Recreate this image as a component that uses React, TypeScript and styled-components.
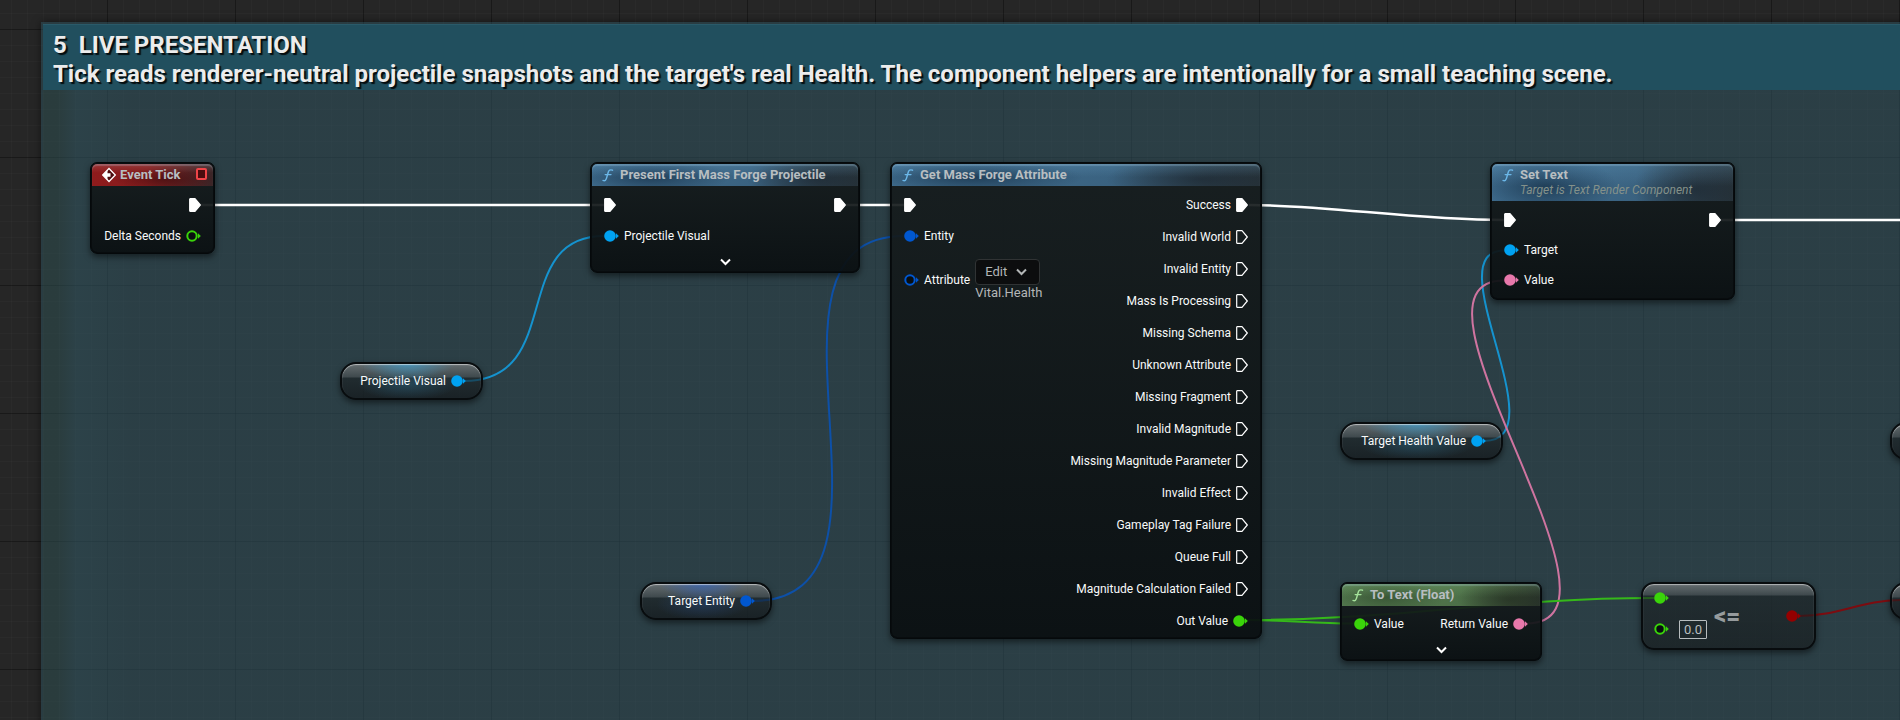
import React from 'react';
import styled, { createGlobalStyle, css } from 'styled-components';

const Global = createGlobalStyle`
  * { box-sizing: border-box; }
  body { margin: 0; background: #262626; }
`;

const white = '#ffffff';
const azure = '#00a2f2';
const blue = '#0057d0';
const green = '#3ad40a';
const pink = '#e878ab';
const red = '#950000';

const Graph = styled.main`
  position: relative;
  min-height: 100vh;
  overflow: hidden;
  font-family: Roboto, 'Liberation Sans', sans-serif;
  font-size: 12px;
  line-height: 16px;
  color: #f8fafa;
  background-color: #262626;
  background-image:
    linear-gradient(90deg, rgba(0, 0, 0, 0.4) 1px, transparent 1px),
    linear-gradient(rgba(0, 0, 0, 0.4) 1px, transparent 1px),
    linear-gradient(90deg, rgba(255, 255, 255, 0.02) 1px, transparent 1px),
    linear-gradient(rgba(255, 255, 255, 0.02) 1px, transparent 1px);
  background-size: 128px 128px, 128px 128px, 16px 16px, 16px 16px;
  background-position: 107px 0, 0 29px, 11px 0, 0 13px;
`;

const Comment = styled.section`
  position: absolute;
  left: 41px;
  top: 22px;
  right: -8px;
  bottom: -8px;
  border: 2px solid rgba(43, 82, 94, 0.5);
  background: linear-gradient(90deg, rgba(46, 82, 84, 0.5) 0, rgba(46, 82, 84, 0.5) 14px, rgba(49, 88, 100, 0.56) 34px, rgba(47, 82, 94, 0.56) 90px);
  background-clip: padding-box;
  box-shadow: 0 0 8px rgba(0, 0, 0, 0.5);
`;

const CommentTitle = styled.h1`
  margin: 0;
  height: 66px;
  padding: 6px 10px;
  font-size: 24px;
  line-height: 29px;
  font-weight: 700;
  white-space: pre;
  color: #ececec;
  text-shadow: 2px 2px 1px rgba(0, 0, 0, 0.85);
  background: #214f5e;
  border-top: 1px solid #2a5a69;
`;

const Wires = styled.svg`
  position: absolute;
  inset: 0;
  width: 100%;
  height: 100%;
  fill: none;
`;

type Place = { $x: number; $y: number; $w: number };

const NodeFrame = styled.article<Place>`
  position: absolute;
  left: ${p => p.$x}px;
  top: ${p => p.$y}px;
  width: ${p => p.$w}px;
  padding: 1px;
  border-radius: 7px;
  background: linear-gradient(rgba(22, 28, 29, 0.92), rgba(10, 15, 17, 0.94));
  border: 1px solid #05090b;
  box-shadow: 0 3px 6px rgba(0, 0, 0, 0.5), inset 0 0 0 1px #080c0e;
`;

const headers = {
  event: css`
    background:
      linear-gradient(rgba(255, 255, 255, 0.12), transparent 40%),
      radial-gradient(ellipse at 60% 70%, rgba(60, 10, 12, 0.6), transparent 50%),
      linear-gradient(90deg, #8f1b1c 0, #851d1e 45%, #3a2527 100%);
  `,
  call: css`
    background:
      linear-gradient(rgba(120, 180, 220, 0.2), transparent 60%),
      radial-gradient(ellipse 30% 80% at 22% 60%, rgba(25, 52, 76, 0.8), transparent),
      radial-gradient(ellipse 26% 90% at 84% 70%, rgba(22, 32, 42, 0.5), transparent),
      linear-gradient(90deg, #416f91 0, #3a6280 60%, #2e404c 85%, #28343b 100%);
  `,
  pure: css`
    background:
      linear-gradient(rgba(150, 210, 140, 0.18), transparent 60%),
      radial-gradient(ellipse 30% 80% at 22% 60%, rgba(48, 74, 45, 0.7), transparent),
      radial-gradient(ellipse 26% 90% at 84% 70%, rgba(28, 38, 28, 0.5), transparent),
      linear-gradient(90deg, #547a4f 0, #4d7048 60%, #384a34 85%, #2a352c 100%);
  `,
};

const Header = styled.header<{ $kind: keyof typeof headers }>`
  display: flex;
  align-items: flex-start;
  padding: 3px 6px 3px 10px;
  gap: 4px;
  border-radius: 5px 5px 0 0;
  box-shadow: inset 0 2px 1px rgba(180, 215, 235, 0.25);
  ${p => headers[p.$kind]}
`;

const Titles = styled.div`
  flex: 1;
  white-space: nowrap;
`;

const Title = styled.h2`
  margin: 0;
  font-size: 13px;
  line-height: 16px;
  font-weight: 700;
  color: #b8bec1;
`;

const Subtitle = styled.p`
  margin: 0;
  font-style: italic;
  font-size: 12px;
  line-height: 15px;
  color: #84918a;
`;

const Body = styled.div<{ $top?: number; $tail?: number }>`
  display: flex;
  justify-content: space-between;
  padding: ${p => p.$top ?? 11}px 12px ${p => p.$tail ?? 8}px;
`;

const Column = styled.div<{ $end?: boolean; $gap: number }>`
  display: flex;
  flex-direction: column;
  align-items: ${p => (p.$end ? 'flex-end' : 'flex-start')};
  gap: ${p => p.$gap}px;
`;

const Row = styled.div<{ $tall?: boolean }>`
  display: flex;
  align-items: center;
  height: ${p => (p.$tall ? 42 : 16)}px;
  gap: 5px;
  white-space: nowrap;
`;

const Expand = styled.button`
  display: flex;
  align-items: center;
  justify-content: center;
  width: 100%;
  height: 19px;
  padding: 0;
  border: 0;
  background: none;
`;

const Pill = styled.article<Place & { $glow?: string }>`
  position: absolute;
  left: ${p => p.$x}px;
  top: ${p => p.$y}px;
  width: ${p => p.$w}px;
  height: 38px;
  display: flex;
  align-items: center;
  justify-content: flex-end;
  gap: 5px;
  padding: 0 15px;
  white-space: nowrap;
  border: 2px solid #080c0e;
  border-radius: 16px;
  background:
    radial-gradient(ellipse 34% 14px at 47% 0, rgba(${p => p.$glow ?? '0, 0, 0'}, ${p => (p.$glow ? 0.7 : 0)}), transparent),
    radial-gradient(ellipse 36% 16px at 47% 20px, rgba(${p => p.$glow ?? '0, 0, 0'}, ${p => (p.$glow ? 0.25 : 0)}), transparent),
    linear-gradient(rgba(140, 140, 140, 0.6) 0, rgba(76, 80, 82, 0.6) 13px, rgba(26, 31, 33, 0.6) 14px, rgba(14, 15, 17, 0.6) 100%);
  box-shadow: 0 3px 6px rgba(0, 0, 0, 0.5), inset 0 1px 1px rgba(255, 255, 255, 0.55);
`;

const Compare = styled.article<Place>`
  position: absolute;
  left: ${p => p.$x}px;
  top: ${p => p.$y}px;
  width: ${p => p.$w}px;
  height: 68px;
  display: flex;
  align-items: center;
  gap: 7px;
  padding: 0 13px 0 11px;
  border: 2px solid #080c0e;
  border-radius: 13px;
  background: linear-gradient(rgba(140, 140, 140, 0.6) 0, rgba(76, 80, 82, 0.6) 11px, rgba(26, 31, 33, 0.6) 12px, rgba(20, 23, 24, 0.6) 100%);
  box-shadow: 0 3px 6px rgba(0, 0, 0, 0.5), inset 0 1px 1px rgba(255, 255, 255, 0.5);
`;

const Inputs = styled(Column)`
  align-self: flex-start;
  padding-top: 6px;
`;

const Operator = styled.strong`
  flex: 1;
  font-size: 24px;
  line-height: 24px;
  font-weight: 900;
  color: #969b9d;
`;

const NumberBox = styled.input`
  width: 28px;
  height: 19px;
  margin-left: 5px;
  padding: 0;
  text-align: center;
  font: inherit;
  font-size: 13px;
  color: #b8bdbf;
  background: transparent;
  border: 1px solid #b8bdbf;
  border-radius: 1px;
`;

const Picker = styled.div`
  display: flex;
  flex-direction: column;
  color: #b3b6b7;
  font-size: 13px;
  line-height: 16px;
`;

const EditButton = styled.button`
  display: flex;
  align-items: center;
  gap: 9px;
  width: 65px;
  height: 26px;
  padding: 0 9px;
  font: inherit;
  font-size: 13px;
  color: inherit;
  background: #0c0d0e;
  border: 1px solid #303334;
  border-radius: 4px;
`;

const ExecPin = ({ on = true }: { on?: boolean }) => (
  <svg width="12" height="14" viewBox="0 0 12 14">
    <path d="M.7 1.2Q.7.7 1.2.7H6L11.3 7 6 13.3H1.2Q.7 13.3.7 12.8Z" fill={on ? white : 'none'} stroke={white} strokeWidth="1.2" strokeLinejoin="round" />
  </svg>
);

const DataPin = ({ color, on = true }: { color: string; on?: boolean }) => (
  <svg width="15" height="12" viewBox="0 0 15 12">
    <circle cx="6" cy="6" r={on ? 5.8 : 4.7} fill={on ? color : '#0a0e10'} stroke={color} strokeWidth={on ? 0 : 2} />
    <path d="M12 3.200L14.800 6 12 8.800Z" fill={color} />
  </svg>
);

const FunctionIcon = () => (
  <svg width="14" height="16" viewBox="0 0 14 16" fill="none" stroke="currentColor" strokeWidth="1.4" strokeLinecap="round">
    <path d="M1 13.400c2 .8 3-.2 3.500-2.200L6.300 5C6.800 3.200 8 2.400 10.500 3.200M3.200 7.600h5.800" />
  </svg>
);

const EventIcon = () => (
  <svg width="14" height="16" viewBox="0 0 14 16">
    <path d="M7 1.500L13.300 8 7 14.500.7 8Z" fill="#4a0c0e" stroke="#fff" strokeWidth="1.300" />
    <path d="M.7 8L5.500 3V6.300H8.500V9.700H5.500V13Z" fill="#fff" />
  </svg>
);

const Chevron = ({ color = white }: { color?: string }) => (
  <svg width="11" height="8" viewBox="0 0 11 8" fill="none" stroke={color} strokeWidth="2">
    <path d="M1 1.500L5.500 6 10 1.500" />
  </svg>
);

const IconTint = styled.span<{ $color: string }>`
  display: flex;
  color: ${p => p.$color};
`;

const Marker = styled.span`
  width: 11px;
  height: 12px;
  margin-top: 1px;
  border: 2px solid #f04448;
  border-radius: 2px;
  background: #4a0c0e;
`;

const statuses = [
  'Invalid World', 'Invalid Entity', 'Mass Is Processing', 'Missing Schema', 'Unknown Attribute',
  'Missing Fragment', 'Invalid Magnitude', 'Missing Magnitude Parameter', 'Invalid Effect',
  'Gameplay Tag Failure', 'Queue Full', 'Magnitude Calculation Failed',
];

export default function App() {
  return (
    <Graph>
      <Global />
      <Comment>
        <CommentTitle>{'5  LIVE PRESENTATION\nTick reads renderer-neutral projectile snapshots and the target\'s real Health. The component helpers are intentionally for a small teaching scene.'}</CommentTitle>
      </Comment>
      <Wires>
        <g stroke={white} strokeWidth="2.5">
          <path d="M201 205H604M846 205H904M1249 205C1330 205 1410 220 1504 220M1721 220H4000" />
        </g>
        <g strokeWidth="2">
          <path d="M464 381C566 381 508 236 604 236" stroke="#1593cf" />
          <path d="M752 601C928 601 732 236 904 236" stroke="#0d50a8" />
          <path d="M1484 441C1560 441 1434 250.500 1504 250.500" stroke="#1593cf" />
          <path d="M1526 623.500C1650 623.500 1384 280.500 1504 280.500" stroke="#cf74a0" />
          <path d="M1245 620C1400 620 1500 598 1654 598M1245 620C1290 620 1310 623.500 1354 623.500" stroke="#35b81a" />
          <path d="M1799 616C1840 616 1860 600 1904 600" stroke="#7d0c10" />
        </g>
      </Wires>

      <NodeFrame $x={90} $y={162} $w={125}>
        <Header $kind="event">
          <EventIcon />
          <Titles><Title>Event Tick</Title></Titles>
          <Marker />
        </Header>
        <Body>
          <span />
          <Column $end $gap={15}>
            <Row><ExecPin /></Row>
            <Row>Delta Seconds<DataPin color={green} on={false} /></Row>
          </Column>
        </Body>
      </NodeFrame>

      <NodeFrame $x={590} $y={162} $w={270}>
        <Header $kind="call">
          <IconTint $color="#6bb7e8"><FunctionIcon /></IconTint>
          <Titles><Title>Present First Mass Forge Projectile</Title></Titles>
        </Header>
        <Body>
          <Column $gap={15}>
            <Row><ExecPin /></Row>
            <Row><DataPin color={azure} />Projectile Visual</Row>
          </Column>
          <Column $end $gap={15}><Row><ExecPin /></Row></Column>
        </Body>
        <Expand aria-label="Show more"><Chevron /></Expand>
      </NodeFrame>

      <NodeFrame $x={890} $y={162} $w={372}>
        <Header $kind="call">
          <IconTint $color="#6bb7e8"><FunctionIcon /></IconTint>
          <Titles><Title>Get Mass Forge Attribute</Title></Titles>
        </Header>
        <Body>
          <Column $gap={15}>
            <Row><ExecPin /></Row>
            <Row><DataPin color={blue} />Entity</Row>
            <Row $tall>
              <DataPin color={blue} on={false} />Attribute
              <Picker><EditButton>Edit<Chevron color="#b3b6b7" /></EditButton>Vital.Health</Picker>
            </Row>
          </Column>
          <Column $end $gap={16}>
            <Row>Success<ExecPin /></Row>
            {statuses.map(s => <Row key={s}>{s}<ExecPin on={false} /></Row>)}
            <Row>Out Value<DataPin color={green} /></Row>
          </Column>
        </Body>
      </NodeFrame>

      <NodeFrame $x={1490} $y={162} $w={245}>
        <Header $kind="call">
          <IconTint $color="#6bb7e8"><FunctionIcon /></IconTint>
          <Titles><Title>Set Text</Title><Subtitle>Target is Text Render Component</Subtitle></Titles>
        </Header>
        <Body $tail={10}>
          <Column $gap={14}>
            <Row><ExecPin /></Row>
            <Row><DataPin color={azure} />Target</Row>
            <Row><DataPin color={pink} />Value</Row>
          </Column>
          <Column $end $gap={14}><Row><ExecPin /></Row></Column>
        </Body>
      </NodeFrame>

      <NodeFrame $x={1340} $y={582} $w={202}>
        <Header $kind="pure">
          <IconTint $color="#a5e39b"><FunctionIcon /></IconTint>
          <Titles><Title>To Text (Float)</Title></Titles>
        </Header>
        <Body $top={10}>
          <Row><DataPin color={green} />Value</Row>
          <Row>Return Value<DataPin color={pink} /></Row>
        </Body>
        <Expand aria-label="Show more"><Chevron /></Expand>
      </NodeFrame>

      <Pill $x={340} $y={362} $w={143} $glow="60, 160, 210">Projectile Visual<DataPin color={azure} /></Pill>
      <Pill $x={1340} $y={422} $w={163} $glow="60, 160, 210">Target Health Value<DataPin color={azure} /></Pill>
      <Pill $x={640} $y={582} $w={132} $glow="50, 100, 190">Target Entity<DataPin color={blue} /></Pill>
      <Pill $x={1890} $y={422} $w={140} />
      <Pill $x={1890} $y={582} $w={140} />

      <Compare $x={1641} $y={582} $w={175}>
        <Inputs $gap={15}>
          <Row><DataPin color={green} /></Row>
          <Row><DataPin color={green} on={false} /><NumberBox aria-label="Compare with" defaultValue="0.0" /></Row>
        </Inputs>
        <Operator>&lt;=</Operator>
        <DataPin color={red} />
      </Compare>
    </Graph>
  );
}
